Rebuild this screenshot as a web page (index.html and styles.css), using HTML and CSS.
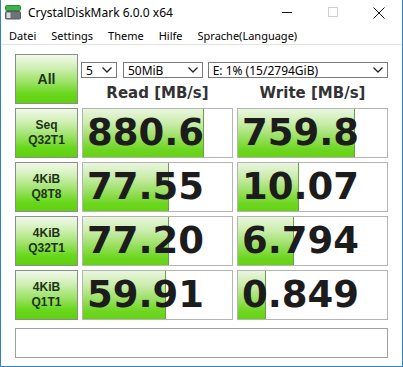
FILE: index.html
```html
<!DOCTYPE html>
<html lang="de">
<head>
  <meta charset="UTF-8">
  <title>CrystalDiskMark 6.0.0 x64</title>
  <link rel="stylesheet" href="styles.css">
</head>
<body>
  <div class="window">
    <div class="titlebar">
      <svg class="app-icon" width="16" height="15" viewBox="0 0 16 15">
        <rect x="0.5" y="0.5" width="15" height="5" rx="1" fill="#3db34a" stroke="#2a8a35"/>
        <rect x="0.5" y="6.5" width="15" height="7.5" rx="1" fill="#6f7377" stroke="#55595c"/>
        <rect x="1.5" y="7.5" width="4" height="5.5" fill="#d8dadb"/>
      </svg>
      <span class="title">CrystalDiskMark 6.0.0 x64</span>
      <div class="controls">
        <span class="ctl"><svg width="11" height="11" viewBox="0 0 11 11"><line x1="0" y1="5.5" x2="10" y2="5.5" stroke="#111" stroke-width="1"/></svg></span>
        <span class="ctl"><svg width="11" height="11" viewBox="0 0 11 11"><rect x="0.5" y="0.5" width="9" height="9" fill="none" stroke="#cfcfcf" stroke-width="1"/></svg></span>
        <span class="ctl"><svg width="12" height="12" viewBox="0 0 12 12"><path d="M0.5 0.5 L11.5 11.5 M11.5 0.5 L0.5 11.5" stroke="#111" stroke-width="1"/></svg></span>
      </div>
    </div>
    <div class="menubar">
      <span>Datei</span>
      <span>Settings</span>
      <span>Theme</span>
      <span>Hilfe</span>
      <span>Sprache(Language)</span>
    </div>
    <div class="main">
      <div class="grid">
        <div class="label all">All</div>
        <div class="head">
          <div class="selects">
            <div class="select s-count"><span>5</span><svg width="10" height="6" viewBox="0 0 10 6"><polyline points="0.5,0.5 5,5 9.5,0.5" fill="none" stroke="#222" stroke-width="1.3"/></svg></div>
            <div class="select s-size"><span>50MiB</span><svg width="10" height="6" viewBox="0 0 10 6"><polyline points="0.5,0.5 5,5 9.5,0.5" fill="none" stroke="#222" stroke-width="1.3"/></svg></div>
            <div class="select s-drive"><span>E: 1% (15/2794GiB)</span><svg width="10" height="6" viewBox="0 0 10 6"><polyline points="0.5,0.5 5,5 9.5,0.5" fill="none" stroke="#222" stroke-width="1.3"/></svg></div>
          </div>
          <div class="headers">
            <span>Read [MB/s]</span>
            <span>Write [MB/s]</span>
          </div>
        </div>

        <div class="label">Seq<br>Q32T1</div>
        <div class="cell"><div class="fill" style="width:120px"></div><span class="num">880.6</span></div>
        <div class="cell"><div class="fill" style="width:116px"></div><span class="num">759.8</span></div>

        <div class="label">4KiB<br>Q8T8</div>
        <div class="cell"><div class="fill" style="width:85px"></div><span class="num">77.55</span></div>
        <div class="cell"><div class="fill" style="width:60px"></div><span class="num">10.07</span></div>

        <div class="label">4KiB<br>Q32T1</div>
        <div class="cell"><div class="fill" style="width:85px"></div><span class="num">77.20</span></div>
        <div class="cell"><div class="fill" style="width:55px"></div><span class="num">6.794</span></div>

        <div class="label">4KiB<br>Q1T1</div>
        <div class="cell"><div class="fill" style="width:82px"></div><span class="num">59.91</span></div>
        <div class="cell"><div class="fill" style="width:27px"></div><span class="num">0.849</span></div>
      </div>
      <div class="comment"></div>
    </div>
  </div>
</body>
</html>
```

FILE: styles.css
```css
html, body { margin: 0; padding: 0; background: #fff; }
body { width: 403px; height: 367px; overflow: hidden; font-family: "Noto Sans", "Open Sans", sans-serif; }

.window {
  box-sizing: border-box;
  width: 403px;
  height: 367px;
  border: 1px solid #2d85d0;
  border-top: none;
  background: #fff;
}

/* title bar */
.titlebar { display: flex; align-items: center; height: 25px; }
.app-icon { margin-left: 4px; margin-right: 7px; }
.title { font-size: 12px; color: #000; }
.controls { display: flex; margin-left: auto; }
.ctl { display: flex; align-items: center; justify-content: center; width: 46px; height: 25px; }

/* menu */
.menubar { display: flex; height: 19px; align-items: center; padding-left: 1px; border-bottom: 1px solid #e3e3e3; }
.menubar span { font-size: 11px; color: #000; padding: 1px 7.5px 0 7.5px; }
.menubar span:first-child { padding-left: 7px; }

/* main area */
.main { padding: 9px 13px 0 14px; }
.grid {
  display: grid;
  grid-template-columns: 63px 151px 151px;
  grid-auto-rows: 50px;
  column-gap: 4px;
  row-gap: 4px;
}

.label {
  box-sizing: border-box;
  display: flex;
  align-items: center;
  justify-content: center;
  text-align: center;
  border: 1px solid #8d8d8d;
  background: linear-gradient(to bottom, #f1f9ea 0%, #d2f0b8 25%, #9ee36a 55%, #6ad81e 80%, #5fd10c 100%);
  font-family: "Liberation Sans", Arial, sans-serif;
  font-weight: bold;
  font-size: 12px;
  line-height: 15px;
  color: #1d3316;
}
.label.all { font-size: 14px; }

.head { grid-column: 2 / 4; }
.selects { display: flex; margin-top: 8px; margin-left: -1px; }
.select {
  box-sizing: border-box;
  display: flex;
  align-items: center;
  height: 16px;
  border: 1px solid #7a7a7a;
  padding: 0 4px 0 4px;
  font-size: 12px;
  color: #000;
  background: #fff;
}
.select svg { margin-left: auto; }
.s-count { width: 36px; }
.s-size { width: 80px; margin-left: 6px; }
.s-drive { width: 181px; margin-left: 5px; }

.headers { display: grid; grid-template-columns: 151px 151px; column-gap: 4px; margin-top: 6px; }
.headers span {
  text-align: center;
  font-family: "DejaVu Sans", Verdana, sans-serif;
  font-weight: bold;
  font-size: 15px;
  line-height: 18px;
  color: #333;
}

.cell {
  position: relative;
  box-sizing: border-box;
  border: 1px solid #b4b4b4;
  background: #fff;
  display: flex;
  align-items: center;
}
.fill {
  position: absolute;
  left: 0;
  top: 0;
  bottom: 0;
  border-right: 1px solid #6f9d45;
  background: linear-gradient(to bottom, #eaf6df 0%, #c9ecaa 30%, #98df5f 60%, #6dd61f 85%, #66d214 100%);
}
.num {
  position: relative;
  padding-left: 4px;
  font-family: "DejaVu Sans", Verdana, sans-serif;
  font-weight: bold;
  font-size: 37px;
  line-height: 40px;
  color: #1c1c1c;
}

.comment {
  box-sizing: border-box;
  margin-top: 8px;
  width: 373px;
  height: 30px;
  border: 1px solid #a39e9c;
  background: #fff;
}
```
